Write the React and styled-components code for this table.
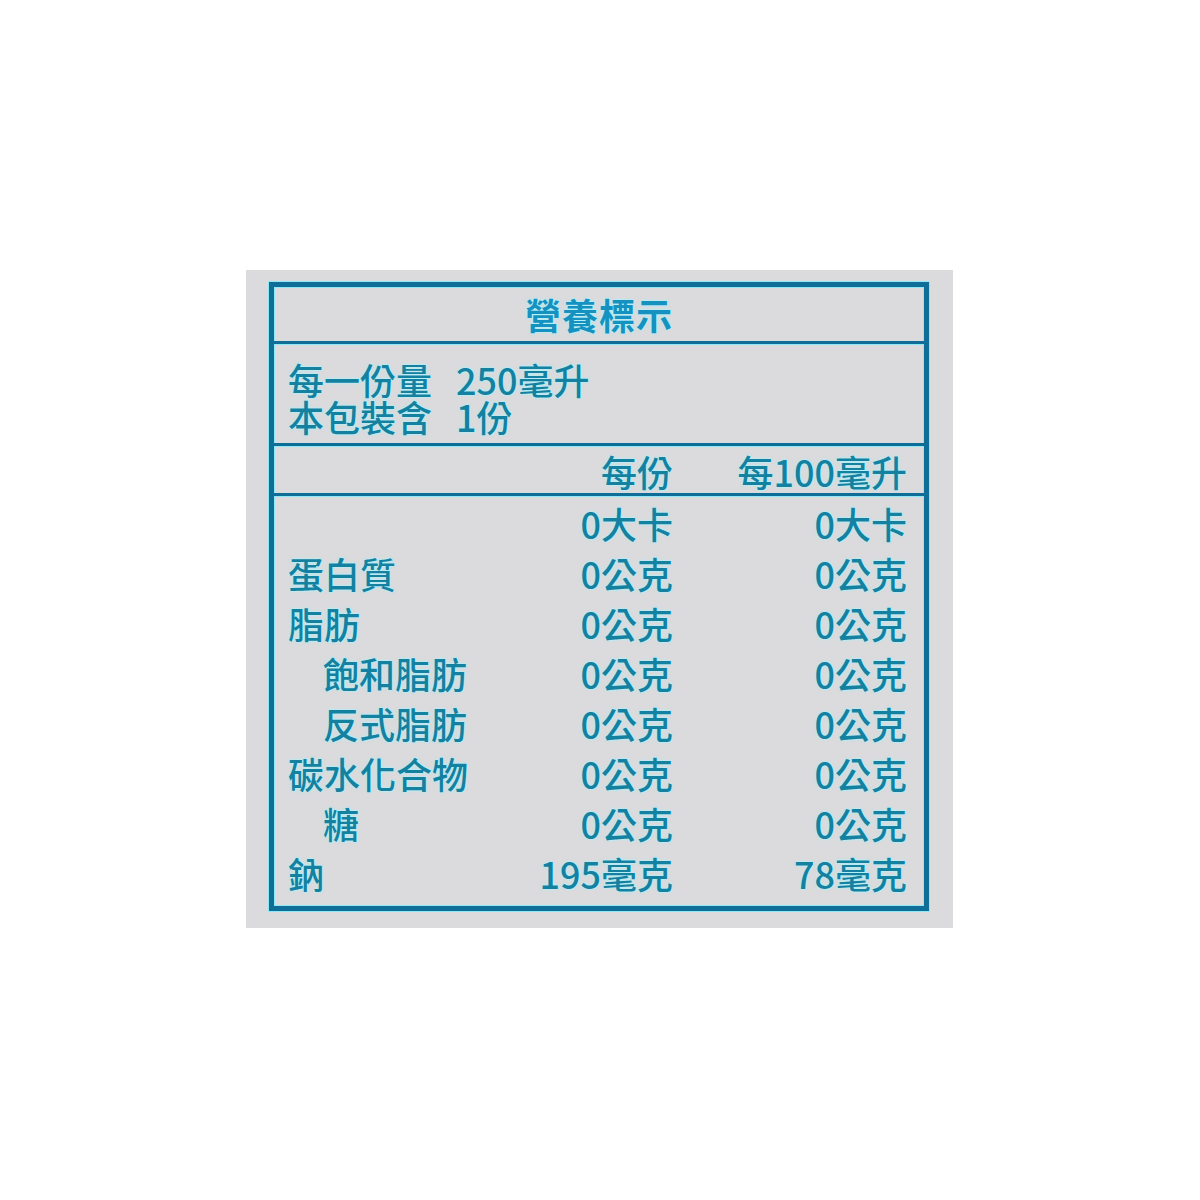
import React from 'react';
import styled, { createGlobalStyle } from 'styled-components';

const GlobalStyle = createGlobalStyle`
  body {
    margin: 0;
    background: #ffffff;
    font-family: "Noto Sans CJK TC", "Noto Sans", sans-serif;
  }
`;

const halo = '0 0 1px #c8f7ff, 0 0 2px #a9f0fb, 0 0 3px #a9f0fb';

const Page = styled.div`
  width: 1200px;
  height: 1200px;
  padding: 270px 0 0 246px;
  box-sizing: border-box;
`;

const Panel = styled.div`
  width: 707px;
  height: 658px;
  box-sizing: border-box;
  padding: 12px 24px 17px 23px;
  background: #dbdadc;
`;

const Box = styled.div`
  width: 660px;
  height: 629px;
  box-sizing: border-box;
  border: 5px solid #0f6e97;
  box-shadow: 0 0 0 1px #8ee9f7, inset 0 0 0 1px #8ee9f7;
  display: flex;
  flex-direction: column;
`;

const Section = styled.div`
  border-bottom: ${(p) => (p.$last ? 'none' : '3px solid #0f6e97')};
  box-shadow: ${(p) => (p.$last ? 'none' : '0 1px 0 #8ee9f7')};
  padding: ${(p) => p.$pad || '0'};
  flex: ${(p) => (p.$grow ? '1' : 'none')};
  height: ${(p) => (p.$h ? `${p.$h}px` : 'auto')};
  box-sizing: border-box;
`;

const Title = styled.h1`
  margin: 0;
  text-align: center;
  font-size: 36px;
  line-height: 55px;
  font-weight: 700;
  letter-spacing: 1px;
  color: #1592c0;
  text-shadow: ${halo};
`;

const Serving = styled.div`
  display: grid;
  grid-template-columns: 168px 1fr;
  font-size: 36px;
  line-height: 37px;
  font-weight: 500;
  color: #13819f;
  text-shadow: ${halo};
`;

const Grid = styled.div`
  display: grid;
  grid-template-columns: 185px 200px 234px;
  font-size: 36px;
  line-height: ${(p) => p.$lh}px;
  font-weight: 500;
  color: #13819f;
  text-shadow: ${halo};
`;

const Label = styled.span`
  padding-left: ${(p) => (p.$sub ? '35px' : '0')};
  white-space: nowrap;
`;

const Value = styled.span`
  text-align: right;
  white-space: nowrap;
`;

const rows = [
  { label: '', a: '0大卡', b: '0大卡' },
  { label: '蛋白質', a: '0公克', b: '0公克' },
  { label: '脂肪', a: '0公克', b: '0公克' },
  { label: '飽和脂肪', a: '0公克', b: '0公克', sub: true },
  { label: '反式脂肪', a: '0公克', b: '0公克', sub: true },
  { label: '碳水化合物', a: '0公克', b: '0公克' },
  { label: '糖', a: '0公克', b: '0公克', sub: true },
  { label: '鈉', a: '195毫克', b: '78毫克' },
];

export default function App() {
  return (
    <Page>
      <GlobalStyle />
      <Panel>
        <Box>
          <Section $h={57}>
            <Title>營養標示</Title>
          </Section>
          <Section $h={102} $pad="17px 0 0 14px">
            <Serving>
              <span>每一份量</span>
              <span>250毫升</span>
              <span>本包裝含</span>
              <span>1份</span>
            </Serving>
          </Section>
          <Section $h={50} $pad="5px 0 0 14px">
            <Grid $lh={40}>
              <Label />
              <Value>每份</Value>
              <Value>每100毫升</Value>
            </Grid>
          </Section>
          <Section $last $grow $pad="2px 0 0 14px">
            <Grid $lh={50}>
              {rows.map((r, i) => (
                <React.Fragment key={i}>
                  <Label $sub={r.sub}>{r.label}</Label>
                  <Value>{r.a}</Value>
                  <Value>{r.b}</Value>
                </React.Fragment>
              ))}
            </Grid>
          </Section>
        </Box>
      </Panel>
    </Page>
  );
}
